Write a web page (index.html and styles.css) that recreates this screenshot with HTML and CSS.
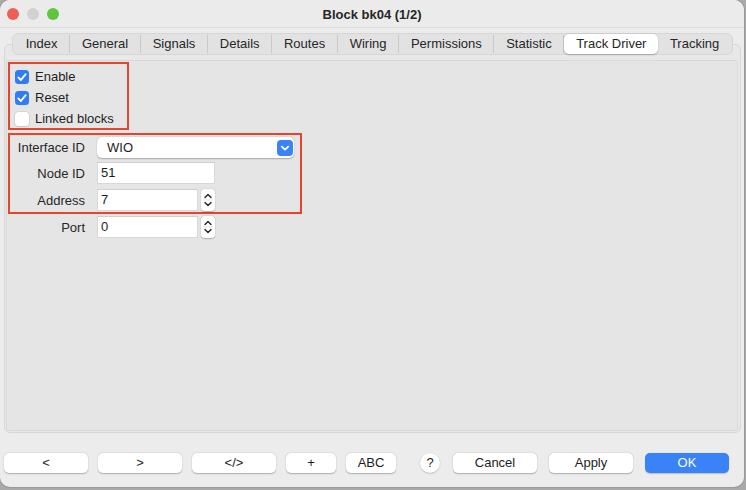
FILE: index.html
```html
<!DOCTYPE html>
<html>
<head>
<meta charset="utf-8">
<link rel="stylesheet" href="styles.css">
</head>
<body>
<div class="window">
  <div class="titlebar">
    <div class="lights">
      <span class="light red"></span>
      <span class="light grey"></span>
      <span class="light green"></span>
    </div>
    <div class="title">Block bk04 (1/2)</div>
  </div>

  <div class="tabs">
    <span class="tab">Index</span>
    <span class="tab">General</span>
    <span class="tab">Signals</span>
    <span class="tab">Details</span>
    <span class="tab">Routes</span>
    <span class="tab">Wiring</span>
    <span class="tab">Permissions</span>
    <span class="tab">Statistic</span>
    <span class="tab selected">Track Driver</span>
    <span class="tab last">Tracking</span>
  </div>

  <div class="tabbox">
    <div class="panel">
      <div class="mark checks">
        <label class="check"><span class="cb on"><svg width="14" height="14" viewBox="0 0 14 14"><path d="M3.3 7.4 L5.9 10 L10.7 4.2" fill="none" stroke="#fff" stroke-width="1.9" stroke-linecap="round" stroke-linejoin="round"/></svg></span>Enable</label>
        <label class="check"><span class="cb on"><svg width="14" height="14" viewBox="0 0 14 14"><path d="M3.3 7.4 L5.9 10 L10.7 4.2" fill="none" stroke="#fff" stroke-width="1.9" stroke-linecap="round" stroke-linejoin="round"/></svg></span>Reset</label>
        <label class="check"><span class="cb"></span>Linked blocks</label>
      </div>

      <div class="mark fields">
        <div class="row">
          <span class="lbl">Interface ID</span>
          <div class="select">
            <span class="sel-text">WIO</span>
            <span class="sel-btn"><svg width="16" height="16" viewBox="0 0 16 16"><path d="M4.8 6.6 L8 9.6 L11.2 6.6" fill="none" stroke="#fff" stroke-width="1.8" stroke-linecap="round" stroke-linejoin="round"/></svg></span>
          </div>
        </div>
        <div class="row">
          <span class="lbl">Node ID</span>
          <div class="input wide">51</div>
        </div>
        <div class="row">
          <span class="lbl">Address</span>
          <div class="input">7</div>
          <span class="stepper"><svg width="14" height="22" viewBox="0 0 14 22"><path d="M4 8.5 L7 5.5 L10 8.5" fill="none" stroke="#222" stroke-width="1.4" stroke-linecap="round" stroke-linejoin="round"/><line x1="2" y1="11" x2="12" y2="11" stroke="#e2e2e2" stroke-width="1"/><path d="M4 13.5 L7 16.5 L10 13.5" fill="none" stroke="#222" stroke-width="1.4" stroke-linecap="round" stroke-linejoin="round"/></svg></span>
        </div>
      </div>

      <div class="row port">
        <span class="lbl">Port</span>
        <div class="input">0</div>
        <span class="stepper"><svg width="14" height="22" viewBox="0 0 14 22"><path d="M4 8.5 L7 5.5 L10 8.5" fill="none" stroke="#222" stroke-width="1.4" stroke-linecap="round" stroke-linejoin="round"/><line x1="2" y1="11" x2="12" y2="11" stroke="#e2e2e2" stroke-width="1"/><path d="M4 13.5 L7 16.5 L10 13.5" fill="none" stroke="#222" stroke-width="1.4" stroke-linecap="round" stroke-linejoin="round"/></svg></span>
      </div>
    </div>
  </div>

  <div class="buttons">
    <button class="btn w84">&lt;</button>
    <button class="btn w84">&gt;</button>
    <button class="btn w84">&lt;/&gt;</button>
    <button class="btn w50">+</button>
    <button class="btn w50">ABC</button>
    <button class="btn help">?</button>
    <button class="btn w84 cancel">Cancel</button>
    <button class="btn w84">Apply</button>
    <button class="btn w84 ok">OK</button>
  </div>
</div>
</body>
</html>
```

FILE: styles.css
```css
* { box-sizing: border-box; }

html, body {
  margin: 0;
  padding: 0;
}

body {
  width: 746px;
  height: 490px;
  background: #a9a9a9;
  font-family: "Liberation Sans", Arial, sans-serif;
  font-size: 13px;
  color: #1d1d1d;
  overflow: hidden;
}

.window {
  width: 744px;
  height: 487px;
  background: #ececec;
  border-radius: 10px;
  box-shadow: 0 0 0 1px #9a9a9a;
  display: flex;
  flex-direction: column;
  overflow: hidden;
}

/* title bar */
.titlebar {
  height: 28px;
  flex: 0 0 28px;
  display: flex;
  align-items: center;
  position: relative;
  background: #ebebeb;
  border-bottom: 1px solid #dedede;
}

.lights {
  display: flex;
  gap: 8px;
  padding-left: 7px;
  padding-top: 1px;
}

.light {
  width: 12px;
  height: 12px;
  border-radius: 50%;
  display: block;
}
.light.red { background: #ee5f57; }
.light.grey { background: #d2d2d2; }
.light.green { background: #5fc53f; }

.title {
  position: absolute;
  left: 0;
  right: 0;
  top: 7px;
  text-align: center;
  font-weight: bold;
  font-size: 13px;
  color: #262626;
  pointer-events: none;
}

/* tabs */
.tabs {
  position: relative;
  z-index: 2;
  margin: 5px 11px 0 12px;
  height: 22px;
  display: flex;
  align-items: center;
  background: #e2e2e2;
  border: 1px solid #d6d6d6;
  border-radius: 6px;
  padding: 0 1px;
}

.tab {
  flex: 1 1 auto;
  text-align: center;
  padding: 0 9px;
  height: 18px;
  line-height: 18px;
  color: #262626;
  white-space: nowrap;
  border-right: 1px solid #c9c9c9;
}
.tab.last { border-right: none; }
.tab.selected {
  background: #ffffff;
  border-radius: 5px;
  height: 20px;
  line-height: 20px;
  box-shadow: 0 0.5px 1.5px rgba(0,0,0,0.25);
  border-right: none;
}

/* tab box */
.tabbox {
  margin: -11px 3px 0 4px;
  height: 389px;
  flex: 0 0 389px;
  background: #e8e8e8;
  border: 1px solid #d7d7d7;
  border-radius: 6px;
  padding: 15px 2px 1px 1px;
}

.panel {
  height: 100%;
  background: #e5e5e5;
  border: 1px solid #d9d9d9;
  border-radius: 2px;
  padding: 1px 0 0 1px;
}

.mark {
  border: 2px solid #e5442d;
}

.checks {
  width: 121px;
  padding: 3px 0 0 5px;
  display: flex;
  flex-direction: column;
  gap: 2px;
}

.check {
  height: 19px;
  display: flex;
  align-items: center;
  gap: 6px;
}

.cb {
  width: 14px;
  height: 14px;
  border-radius: 3.5px;
  background: #ffffff;
  box-shadow: 0 0 0 0.5px #c6c6c6, 0 0.5px 1px rgba(0,0,0,0.12);
  display: block;
}
.cb svg { display: block; }
.cb.on {
  background: #2f7cf6;
  box-shadow: none;
}

.fields {
  margin-top: 3px;
  width: 294px;
  padding: 2px 0 1px 5px;
  display: flex;
  flex-direction: column;
  gap: 4px;
}
.fields .row:nth-child(3) { margin-top: 1px; }

.row {
  display: flex;
  align-items: center;
  height: 22px;
}
.row:first-child { height: 21px; }

.lbl {
  width: 70px;
  text-align: right;
  margin-right: 12px;
  color: #262626;
  white-space: nowrap;
}

.select {
  width: 197px;
  height: 21px;
  background: #ffffff;
  border-radius: 5px;
  box-shadow: 0 0.5px 1.5px rgba(0,0,0,0.28);
  display: flex;
  align-items: center;
  justify-content: space-between;
  padding: 0 1px 0 10px;
}
.sel-btn {
  width: 16px;
  height: 16px;
  border-radius: 4px;
  background: #3b82f6;
  display: block;
}
.sel-btn svg { display: block; }

.input {
  width: 101px;
  height: 22px;
  background: #ffffff;
  border: 1px solid #d8d8d8;
  border-top-color: #cfcfcf;
  padding: 0 3px;
  line-height: 20px;
  color: #1d1d1d;
}
.input.wide { width: 118px; }

.stepper {
  margin-left: 3px;
  width: 14px;
  height: 22px;
  background: #ffffff;
  border-radius: 4px;
  box-shadow: 0 0.5px 1.5px rgba(0,0,0,0.25);
  display: block;
}
.stepper svg { display: block; }

.port {
  margin-top: 2px;
  margin-left: 7px;
}

/* bottom buttons */
.buttons {
  margin-top: 20px;
  padding-left: 4px;
  display: flex;
  align-items: center;
  height: 20px;
}

.btn {
  font-family: "Liberation Sans", Arial, sans-serif;
  font-size: 13px;
  color: #1d1d1d;
  height: 20px;
  background: #ffffff;
  border: none;
  border-radius: 5px;
  box-shadow: 0 0.5px 1.5px rgba(0,0,0,0.28);
  padding: 0;
  margin: 0 10px 0 0;
  line-height: 20px;
}
.w84 { width: 84px; }
.w50 { width: 50px; }
.w50 + .help { margin-left: 14px; }
.help {
  width: 20px;
  height: 20px;
  border-radius: 50%;
  margin-right: 13px;
}
.cancel, .cancel + .btn { margin-right: 12px; }
.ok {
  background: #3a82f7;
  color: #ffffff;
  box-shadow: 0 0.5px 1px rgba(0,0,0,0.2);
}
```
